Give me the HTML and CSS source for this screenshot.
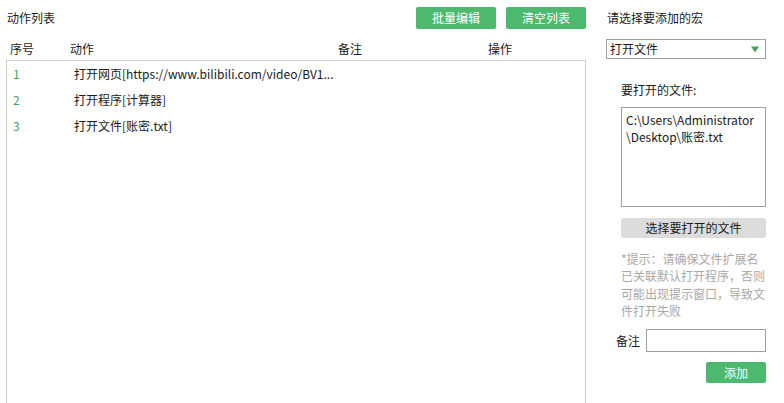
FILE: index.html
```html
<!DOCTYPE html>
<html lang="zh-CN">
<head>
<meta charset="utf-8">
<title>动作列表</title>
<link rel="stylesheet" href="styles.css">
</head>
<body>
<div class="app">
  <section class="left">
    <div class="toolbar">
      <span class="title">动作列表</span>
      <div class="actions">
        <button class="btn btn-green">批量编辑</button>
        <button class="btn btn-green">清空列表</button>
      </div>
    </div>
    <div class="thead">
      <span>序号</span>
      <span>动作</span>
      <span>备注</span>
      <span>操作</span>
    </div>
    <div class="list">
      <div class="row"><span class="no">1</span><span class="act">打开网页[https://www.bilibili.com/video/BV1...</span></div>
      <div class="row"><span class="no">2</span><span class="act">打开程序[计算器]</span></div>
      <div class="row"><span class="no">3</span><span class="act">打开文件[账密.txt]</span></div>
    </div>
  </section>
  <aside class="right">
    <div class="title">请选择要添加的宏</div>
    <div class="select">
      <span>打开文件</span>
      <svg class="caret" width="8" height="7" viewBox="0 0 8 7"><path d="M0 0.5 H8 L4 6.5 Z" fill="#3aa657"/></svg>
    </div>
    <div class="panel">
      <div class="label">要打开的文件:</div>
      <div class="filebox">C:\Users\Administrator<br>\Desktop\账密.txt</div>
      <button class="btn btn-gray">选择要打开的文件</button>
      <p class="hint">*提示：请确保文件扩展名已关联默认打开程序，否则可能出现提示窗口，导致文件打开失败</p>
    </div>
    <div class="note-row">
      <label class="note-label">备注</label>
      <div class="note-input"></div>
    </div>
    <div class="add-row">
      <button class="btn btn-green btn-add">添加</button>
    </div>
  </aside>
</div>
</body>
</html>
```
FILE: styles.css
```css
* { box-sizing: border-box; }
html, body {
  margin: 0;
  padding: 0;
  background: #ffffff;
  overflow: hidden;
}
body {
  font-family: "Noto Sans CJK SC", "Microsoft YaHei", sans-serif;
  font-size: 12px;
  color: #1a1a1a;
  width: 784px;
  height: 403px;
}
.app {
  display: flex;
  gap: 20px;
  padding-left: 6px;
}
.left {
  width: 580px;
  display: flex;
  flex-direction: column;
}
.toolbar {
  display: flex;
  justify-content: space-between;
  align-items: center;
  padding-top: 7px;
  height: 29px;
}
.title {
  line-height: 18px;
  padding-left: 1px;
}
.actions {
  display: flex;
  gap: 10px;
}
.btn {
  font-family: inherit;
  font-size: 12px;
  border: none;
  border-radius: 2px;
  padding: 0;
  margin: 0;
  cursor: pointer;
}
.btn-green {
  background: #4cb96f;
  color: #ffffff;
  width: 80px;
  height: 22px;
  line-height: 22px;
}
.thead {
  display: grid;
  grid-template-columns: 60px 268px 150px 1fr;
  padding-left: 4px;
  margin-top: 10px;
  height: 20px;
  line-height: 20px;
  margin-bottom: 1px;
}
.list {
  border: 1px solid #c6d6c6;
  height: 360px;
}
.row {
  display: flex;
  height: 26px;
  align-items: center;
  line-height: 18px;
}
.no {
  width: 67px;
  padding-left: 6px;
  color: #3aa657;
}
.act {
  color: #1a1a1a;
}
.right {
  width: 160px;
  display: flex;
  flex-direction: column;
}
.right .title {
  padding-top: 9px;
  padding-left: 1px;
  height: 39px;
}
.select {
  height: 20px;
  border: 1px solid #a0a0a0;
  display: flex;
  align-items: center;
  justify-content: space-between;
  padding: 0 6px 0 3px;
  line-height: 18px;
}
.caret { display: block; }
.panel {
  padding-left: 15px;
}
.label {
  margin-top: 22px;
  line-height: 18px;
}
.filebox {
  margin-top: 8px;
  height: 100px;
  border: 1px solid #a0a0a0;
  padding: 3px 4px;
  line-height: 17px;
  color: #1a1a1a;
}
.btn-gray {
  display: block;
  margin-top: 11px;
  width: 145px;
  height: 20px;
  line-height: 20px;
  background: #dcdcdc;
  color: #1a1a1a;
}
.hint {
  margin: 12px 0 0;
  color: #a8a8a8;
  line-height: 17.3px;
}
.note-row {
  display: flex;
  align-items: center;
  margin-top: 10px;
  padding-left: 10px;
  gap: 6px;
}
.note-label {
  line-height: 18px;
}
.note-input {
  width: 120px;
  height: 23px;
  border: 1px solid #a0a0a0;
  margin-left: auto;
}
.add-row {
  display: flex;
  justify-content: flex-end;
  margin-top: 10px;
}
.btn-add {
  width: 60px;
  height: 21px;
  line-height: 21px;
}
```
